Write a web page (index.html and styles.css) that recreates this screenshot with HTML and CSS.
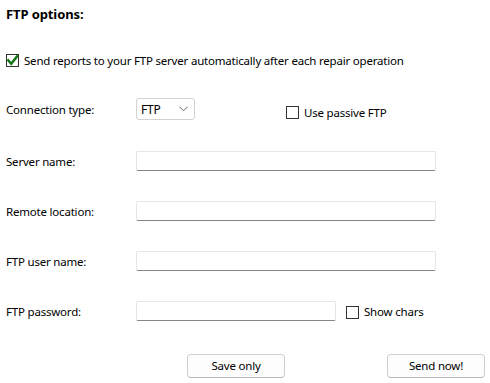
FILE: index.html
```html
<!DOCTYPE html>
<html>
<head>
<meta charset="utf-8" />
<title>FTP options</title>
<link rel="stylesheet" href="styles.css">
</head>
<body>
<div class="page">

    <div class="title">FTP options:</div>

    <div class="row row-send">
        <span class="chk chk-on">
            <svg width="11" height="11" viewBox="0 0 11 11"><path d="M1.2 5.3 L4.2 8.7 L10 1.4" fill="none" stroke="#16761a" stroke-width="2.5" stroke-linejoin="miter" stroke-linecap="square"/></svg>
        </span>
        <span class="chk-text">Send reports to your FTP server automatically after each repair operation</span>
    </div>

    <div class="row row-conn">
        <div class="label">Connection type:</div>
        <div class="select">
            <span>FTP</span>
            <svg width="9" height="6" viewBox="0 0 9 6"><path d="M0.5 0.8 L4.5 4.8 L8.5 0.8" fill="none" stroke="#666" stroke-width="1"/></svg>
        </div>
        <div class="passive">
            <span class="chk"></span>
            <span class="chk-text">Use passive FTP</span>
        </div>
    </div>

    <div class="row row-field row-first">
        <div class="label">Server name:</div>
        <div class="input"></div>
    </div>

    <div class="row row-field">
        <div class="label">Remote location:</div>
        <div class="input"></div>
    </div>

    <div class="row row-field">
        <div class="label">FTP user name:</div>
        <div class="input"></div>
    </div>

    <div class="row row-field">
        <div class="label">FTP password:</div>
        <div class="input input-short"></div>
        <span class="chk chk-show"></span>
        <span class="chk-text">Show chars</span>
    </div>

    <div class="buttons">
        <div class="btn">Save only</div>
        <div class="btn">Send now!</div>
    </div>

</div>
</body>
</html>
```

FILE: styles.css
```css
body{margin:0;padding:0;background:#fff;font-family:"Noto Sans","Open Sans",sans-serif;font-size:11.5px;letter-spacing:-0.2px;color:#000;}
.page{width:490px;height:383px;padding:0 5px 0 6px;box-sizing:border-box;}
.title{height:28px;line-height:28px;font-weight:bold;font-size:13px;letter-spacing:-0.1px;}
.row{display:flex;align-items:center;}
.row-send{margin-top:22px;height:20px;}
.row-conn{margin-top:28px;height:22px;}
.row-field{margin-top:30px;height:20px;}
.row-first{margin-top:31px;}
.label{width:130px;flex:none;}
.chk{width:11px;height:11px;border:1px solid #333;background:#fff;flex:none;display:flex;align-items:center;justify-content:center;}
.chk-text{margin-left:5px;white-space:nowrap;}
.select{width:59px;height:22px;border:1px solid #d3d3d3;border-radius:3px;display:flex;align-items:center;justify-content:space-between;padding:0 6px 0 4px;box-sizing:border-box;font-size:12px;}
.select svg{display:block;}
.passive{display:flex;align-items:center;margin-left:91px;margin-top:6px;}
.input{width:298px;height:18px;border:1px solid #e6e6e6;border-bottom-color:#868686;border-radius:2px;}
.input-short{width:198px;}
.chk-show{margin-left:10px;margin-top:2px;}
.buttons{display:flex;justify-content:flex-end;gap:102px;margin-top:33px;}
.btn{width:96px;height:22px;line-height:22px;text-align:center;border:1px solid #d0d0d0;border-bottom-color:#b8b8b8;border-radius:4px;background:#fdfdfd;}
```
